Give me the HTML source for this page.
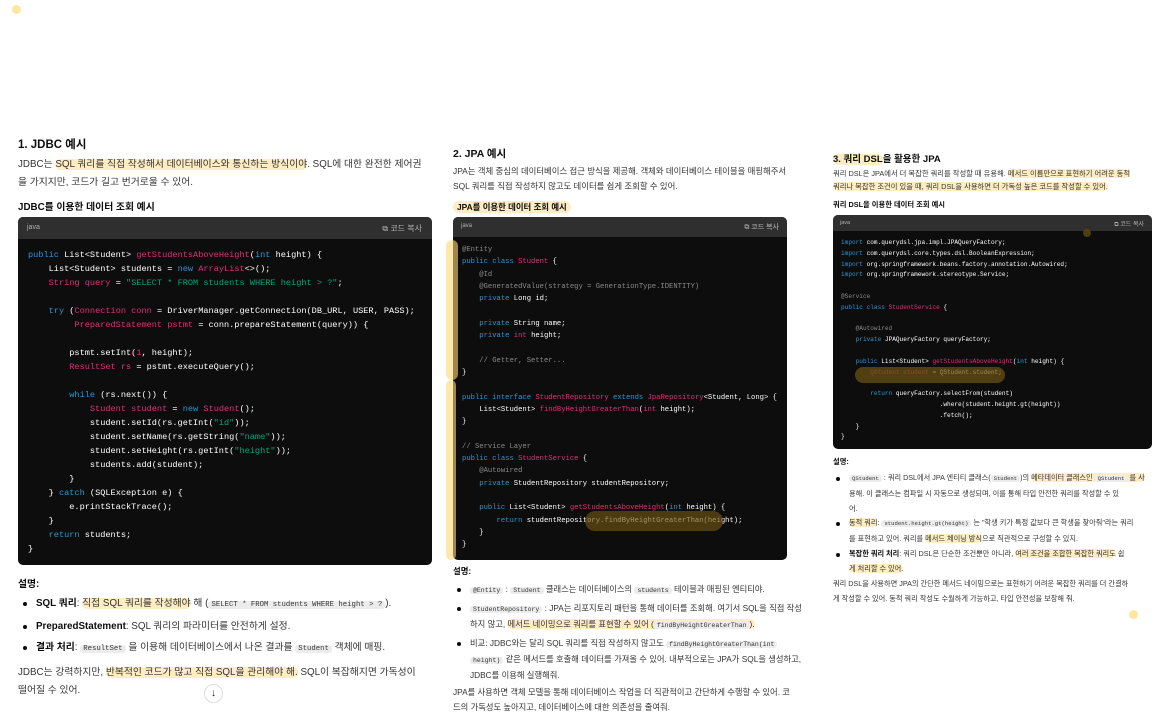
<!DOCTYPE html>
<html><head><meta charset="utf-8">
<style>
*{margin:0;padding:0;box-sizing:border-box}
body{width:1166px;height:723px;overflow:hidden;background:#fff;position:relative;font-family:"Liberation Sans","Noto Sans CJK KR",sans-serif;color:#0d0d0d}
.a{position:absolute;white-space:nowrap}
.hl{background:rgba(253,216,120,.45);border-radius:6px}
.code{position:absolute;background:#0d0d0d;border-radius:5px;overflow:hidden}
.code .hd{background:#2f2f2f;color:#b4b4b4;position:relative}
.code pre{font-family:"Liberation Mono",monospace;color:#fff;position:absolute}
.k{color:#2e95d3}.r{color:#df3079}.g{color:#00a67d}.c{color:#8a8a8a}
code{font-family:"Liberation Mono",monospace;background:#ececec;border-radius:3px;padding:0 3px}
ul{position:absolute;list-style:none}
li{position:relative;white-space:nowrap}
li:before{content:"";position:absolute;left:-13px;top:var(--bt);width:4px;height:4px;border-radius:50%;background:#0d0d0d}
.mk{position:absolute;background:rgba(90,70,15,.85);border-radius:50%}
.yl{position:absolute;background:rgba(253,216,120,.55);border-radius:8px}
</style></head><body>
<div class="a" style="left:12px;top:5px;width:9px;height:9px;border-radius:50%;background:#fde6a0"></div>

<!-- Column 1 -->
<div class="a" style="left:18px;top:136px;font-size:11.5px;font-weight:bold">1. JDBC 예시</div>
<div class="a" style="left:18px;top:156px;font-size:9.8px;line-height:18px;color:#333">JDBC는 <span class="hl">SQL 쿼리를 직접 작성해서 데이터베이스와 통신하는 방식이야</span>. SQL에 대한 완전한 제어권<br>을 가지지만, 코드가 길고 번거로울 수 있어.</div>
<div class="a" style="left:18px;top:199px;font-size:9.8px;font-weight:bold">JDBC를 이용한 데이터 조회 예시</div>
<div class="code" style="left:18px;top:217px;width:414px;height:348px">
 <div class="hd" style="height:22px;font-size:7px"><span style="position:absolute;left:9px;top:7px">java</span><span style="position:absolute;right:10px;top:6px;font-size:8px">⧉ 코드 복사</span></div>
 <pre style="left:10px;top:31px;font-size:8.6px;line-height:14px"><span class="k">public</span> List&lt;Student&gt; <span class="r">getStudentsAboveHeight</span>(<span class="k">int</span> height) {
    List&lt;Student&gt; students = <span class="k">new</span> <span class="r">ArrayList</span>&lt;&gt;();
    <span class="r">String query</span> = <span class="g">"SELECT * FROM students WHERE height &gt; ?"</span>;

    <span class="k">try</span> (<span class="r">Connection conn</span> = DriverManager.getConnection(DB_URL, USER, PASS);
         <span class="r">PreparedStatement pstmt</span> = conn.prepareStatement(query)) {

        pstmt.setInt(<span class="r">1</span>, height);
        <span class="r">ResultSet rs</span> = pstmt.executeQuery();

        <span class="k">while</span> (rs.next()) {
            <span class="r">Student student</span> = <span class="k">new</span> <span class="r">Student</span>();
            student.setId(rs.getInt(<span class="g">"id"</span>));
            student.setName(rs.getString(<span class="g">"name"</span>));
            student.setHeight(rs.getInt(<span class="g">"height"</span>));
            students.add(student);
        }
    } <span class="k">catch</span> (SQLException e) {
        e.printStackTrace();
    }
    <span class="k">return</span> students;
}</pre>
</div>
<div class="a" style="left:18px;top:576px;font-size:9.8px;font-weight:bold">설명:</div>
<ul style="left:36px;top:593px;font-size:9.8px;line-height:21px;color:#333;--bt:9px">
<li><b style="color:#0d0d0d">SQL 쿼리</b>: <span class="hl">직접 SQL 쿼리를 작성해야</span> 해 (<code style="font-size:7.3px">SELECT * FROM students WHERE height &gt; ?</code>).</li>
<li><b style="color:#0d0d0d">PreparedStatement</b>: SQL 쿼리의 파라미터를 안전하게 설정.</li>
<li><b style="color:#0d0d0d">결과 처리</b>: <code style="font-size:7.3px">ResultSet</code> 을 이용해 데이터베이스에서 나온 결과를 <code style="font-size:7.3px">Student</code> 객체에 매핑.</li>
</ul>
<div class="a" style="left:18px;top:664px;font-size:9.8px;line-height:18px;color:#333">JDBC는 강력하지만, <span class="hl">반복적인 코드가 많고 직접 SQL을 관리해야 해.</span> SQL이 복잡해지면 가독성이<br>떨어질 수 있어.</div>
<div class="a" style="left:204px;top:684px;width:19px;height:19px;border-radius:50%;border:1px solid #ddd;background:#fff;font-size:10px;text-align:center;line-height:17px">↓</div>

<!-- Column 2 -->
<div class="a" style="left:453px;top:146px;font-size:10.5px;font-weight:bold">2. JPA 예시</div>
<div class="a" style="left:453px;top:164px;font-size:8.4px;line-height:15px;color:#333">JPA는 객체 중심의 데이터베이스 접근 방식을 제공해. 객체와 데이터베이스 테이블을 매핑해주서<br>SQL 쿼리를 직접 작성하지 않고도 데이터를 쉽게 조회할 수 있어.</div>
<div class="a" style="left:453px;top:201px;font-size:8.4px;font-weight:bold"><span class="hl" style="padding:1px 4px">JPA를 이용한 데이터 조회 예시</span></div>
<div class="code" style="left:453px;top:217px;width:334px;height:343px">
 <div class="hd" style="height:20px;font-size:6px"><span style="position:absolute;left:8px;top:6px">java</span><span style="position:absolute;right:8px;top:5px;font-size:7px">⧉ 코드 복사</span></div>
 <pre style="left:9px;top:27px;font-size:7.2px;line-height:12.3px"><span class="c">@Entity</span>
<span class="k">public class</span> <span class="r">Student</span> {
    <span class="c">@Id</span>
    <span class="c">@GeneratedValue(strategy = GenerationType.IDENTITY)</span>
    <span class="k">private</span> Long id;

    <span class="k">private</span> String name;
    <span class="k">private</span> <span class="r">int</span> height;

    <span class="c">// Getter, Setter...</span>
}

<span class="k">public interface</span> <span class="r">StudentRepository</span> <span class="k">extends</span> <span class="r">JpaRepository</span>&lt;Student, Long&gt; {
    List&lt;Student&gt; <span class="r">findByHeightGreaterThan</span>(<span class="r">int</span> height);
}

<span class="c">// Service Layer</span>
<span class="k">public class</span> <span class="r">StudentService</span> {
    <span class="c">@Autowired</span>
    <span class="k">private</span> StudentRepository studentRepository;

    <span class="k">public</span> List&lt;Student&gt; <span class="r">getStudentsAboveHeight</span>(<span class="k">int</span> height) {
        <span class="k">return</span> studentRepository.findByHeightGreaterThan(height);
    }
}</pre>
 <div class="mk" style="left:132px;top:294px;width:138px;height:20px;border-radius:12px;background:rgba(110,85,20,.65)"></div>
</div>
<div class="yl" style="left:446px;top:240px;width:12px;height:140px;border-radius:8px;background:rgba(253,216,120,.6)"></div>
<div class="yl" style="left:446px;top:380px;width:10px;height:180px;background:rgba(253,216,120,.6)"></div>
<div class="a" style="left:453px;top:565px;font-size:8.4px;font-weight:bold">설명:</div>
<ul style="left:470px;top:582px;font-size:8.3px;line-height:15px;color:#333;--bt:6px">
<li style="margin-bottom:3px"><code style="font-size:6.5px">@Entity</code> : <code style="font-size:6.5px">Student</code> 클래스는 데이터베이스의 <code style="font-size:6.5px">students</code> 테이블과 매핑된 엔티티야.</li>
<li style="margin-bottom:3px"><code style="font-size:6.5px">StudentRepository</code> : JPA는 리포지토리 패턴을 통해 데이터를 조회해. 여기서 SQL을 직접 작성<br>하지 않고, <span class="hl">메서드 네이밍으로 쿼리를 표현할 수 있어 (<code style="font-size:6.5px">findByHeightGreaterThan</code>).</span></li>
<li>비교: JDBC와는 달리 SQL 쿼리를 직접 작성하지 않고도 <code style="font-size:6.5px">findByHeightGreaterThan(int</code><br><code style="font-size:6.5px">height)</code> 같은 메서드를 호출해 데이터를 가져올 수 있어. 내부적으로는 JPA가 SQL을 생성하고,<br>JDBC를 이용해 실행해줘.</li>
</ul>
<div class="a" style="left:453px;top:685px;font-size:8.3px;line-height:15px;color:#333">JPA를 사용하면 객체 모델을 통해 데이터베이스 작업을 더 직관적이고 간단하게 수행할 수 있어. 코<br>드의 가독성도 높아지고, 데이터베이스에 대한 의존성을 줄여줘.</div>

<!-- Column 3 -->
<div class="a" style="left:833px;top:151px;font-size:9.5px;font-weight:bold"><span class="hl">3. 쿼리 DSL</span>을 활용한 JPA</div>
<div class="a" style="left:833px;top:167px;font-size:7.3px;line-height:13px;color:#333">쿼리 DSL은 JPA에서 더 복잡한 쿼리를 작성할 때 유용해. <span class="hl">메서드 이름만으로 표현하기 어려운 동적</span><br><span class="hl">쿼리나 복잡한 조건이 있을 때, 쿼리 DSL을 사용하면 더 가독성 높은 코드를 작성할 수 있어.</span></div>
<div class="a" style="left:833px;top:200px;font-size:7.3px;font-weight:bold">쿼리 DSL을 이용한 데이터 조회 예시</div>
<div class="code" style="left:833px;top:215px;width:319px;height:234px">
 <div class="hd" style="height:16px;font-size:5.5px"><span style="position:absolute;left:7px;top:5px">java</span><span style="position:absolute;right:8px;top:4px;font-size:6px">⧉ 코드 복사</span></div>
 <pre style="left:8px;top:23px;font-size:6.1px;line-height:10.8px"><span class="k">import</span> com.querydsl.jpa.impl.JPAQueryFactory;
<span class="k">import</span> com.querydsl.core.types.dsl.BooleanExpression;
<span class="k">import</span> org.springframework.beans.factory.annotation.Autowired;
<span class="k">import</span> org.springframework.stereotype.Service;

<span class="c">@Service</span>
<span class="k">public class</span> <span class="r">StudentService</span> {

    <span class="c">@Autowired</span>
    <span class="k">private</span> JPAQueryFactory queryFactory;

    <span class="k">public</span> List&lt;Student&gt; <span class="r">getStudentsAboveHeight</span>(<span class="k">int</span> height) {
        <span class="r">QStudent student</span> = QStudent.student;

        <span class="k">return</span> queryFactory.selectFrom(student)
                           .where(student.height.gt(height))
                           .fetch();
    }
}</pre>
 <div class="mk" style="left:22px;top:152px;width:150px;height:16px;border-radius:10px;background:rgba(110,85,20,.7)"></div>
 <div class="mk" style="left:250px;top:14px;width:8px;height:8px"></div>
</div>
<div class="a" style="left:833px;top:457px;font-size:7.3px;font-weight:bold">설명:</div>
<ul style="left:849px;top:471px;font-size:7.2px;line-height:14.8px;color:#333;--bt:6px">
<li style="margin-bottom:0"><code style="font-size:5.6px">QStudent</code> : 쿼리 DSL에서 JPA 엔티티 클래스(<code style="font-size:5.6px">Student</code>)의 <span class="hl">메타데이터 클래스인 <code style="font-size:5.6px">QStudent</code> 를 사</span><br>용해. 이 클래스는 컴파일 시 자동으로 생성되며, 이를 통해 타입 안전한 쿼리를 작성할 수 있<br>어.</li>
<li><span class="hl">동적 쿼리</span>: <code style="font-size:5.6px">student.height.gt(height)</code> 는 "학생 키가 특정 값보다 큰 학생을 찾아줘"라는 쿼리<br>를 표현하고 있어. 쿼리를 <span class="hl">메서드 체이닝 방식</span>으로 직관적으로 구성할 수 있지.</li>
<li><b style="color:#0d0d0d">복잡한 쿼리 처리</b>: 쿼리 DSL은 단순한 조건뿐만 아니라, <span class="hl">여러 조건을 조합한 복잡한 쿼리도</span> 쉽<br><span class="hl">게 처리할 수 있어.</span></li>
</ul>
<div class="a" style="left:833px;top:576px;font-size:7.2px;line-height:15px;color:#333">쿼리 DSL을 사용하면 JPA의 간단한 메서드 네이밍으로는 표현하기 어려운 복잡한 쿼리를 더 간결하<br>게 작성할 수 있어. 동적 쿼리 작성도 수월하게 가능하고, 타입 안전성을 보장해 줘.</div>
<div class="a" style="left:1129px;top:610px;width:9px;height:9px;border-radius:50%;background:#fde6a0"></div>
</body></html>
